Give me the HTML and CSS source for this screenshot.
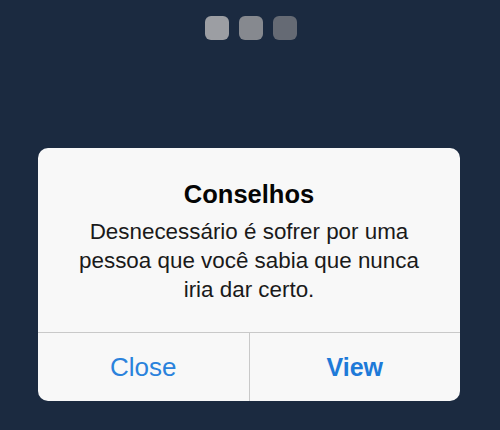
FILE: index.html
```html
<!DOCTYPE html>
<html lang="pt">
<head>
    <meta charset="UTF-8">
    <meta name="viewport" content="width=device-width, initial-scale=1.0">
    <title>Conselhos</title>
    <link rel="stylesheet" href="styles.css">
</head>
<body>
    <div class="dots">
        <span class="dot dot-1"></span>
        <span class="dot dot-2"></span>
        <span class="dot dot-3"></span>
    </div>

    <div class="alert">
        <div class="alert-body">
            <h1 class="alert-title">Conselhos</h1>
            <p class="alert-message">Desnecessário é sofrer por uma pessoa que você sabia que nunca iria dar certo.</p>
        </div>
        <div class="alert-actions">
            <button class="alert-button">Close</button>
            <button class="alert-button primary">View</button>
        </div>
    </div>
</body>
</html>
```

FILE: styles.css
```css
* {
    margin: 0;
    padding: 0;
    box-sizing: border-box;
}

body {
    font-family: "Liberation Sans", Arial, sans-serif;
    background-color: #1b2a40;
    width: 500px;
    height: 430px;
    overflow: hidden;
    padding-top: 16px;
}

.dots {
    display: flex;
    justify-content: center;
    gap: 10px;
    padding-left: 1px;
}

.dot {
    width: 24px;
    height: 24px;
    border-radius: 6px;
}

.dot-1 {
    background: #9c9ea3;
}

.dot-2 {
    background: #86898f;
}

.dot-3 {
    background: #656a74;
}

.alert {
    width: 422px;
    margin: 108px 0 0 38px;
    background: #f8f8f8;
    border-radius: 10px;
    overflow: hidden;
}

.alert-body {
    padding: 31px 34px 28px;
    text-align: center;
}

.alert-title {
    font-size: 25.5px;
    line-height: 30px;
    font-weight: bold;
    color: #050505;
}

.alert-message {
    margin-top: 8px;
    font-size: 22.4px;
    line-height: 29px;
    color: #1a1a1a;
}

.alert-actions {
    display: flex;
    border-top: 1px solid #c9c9c9;
}

.alert-button {
    flex: 1;
    height: 68px;
    background: none;
    border: none;
    font-family: inherit;
    font-size: 26px;
    color: #2a82dc;
    cursor: pointer;
}

.alert-button + .alert-button {
    border-left: 1px solid #c9c9c9;
}

.alert-button.primary {
    font-weight: bold;
    font-size: 25px;
    color: #1e7ad8;
}
```
